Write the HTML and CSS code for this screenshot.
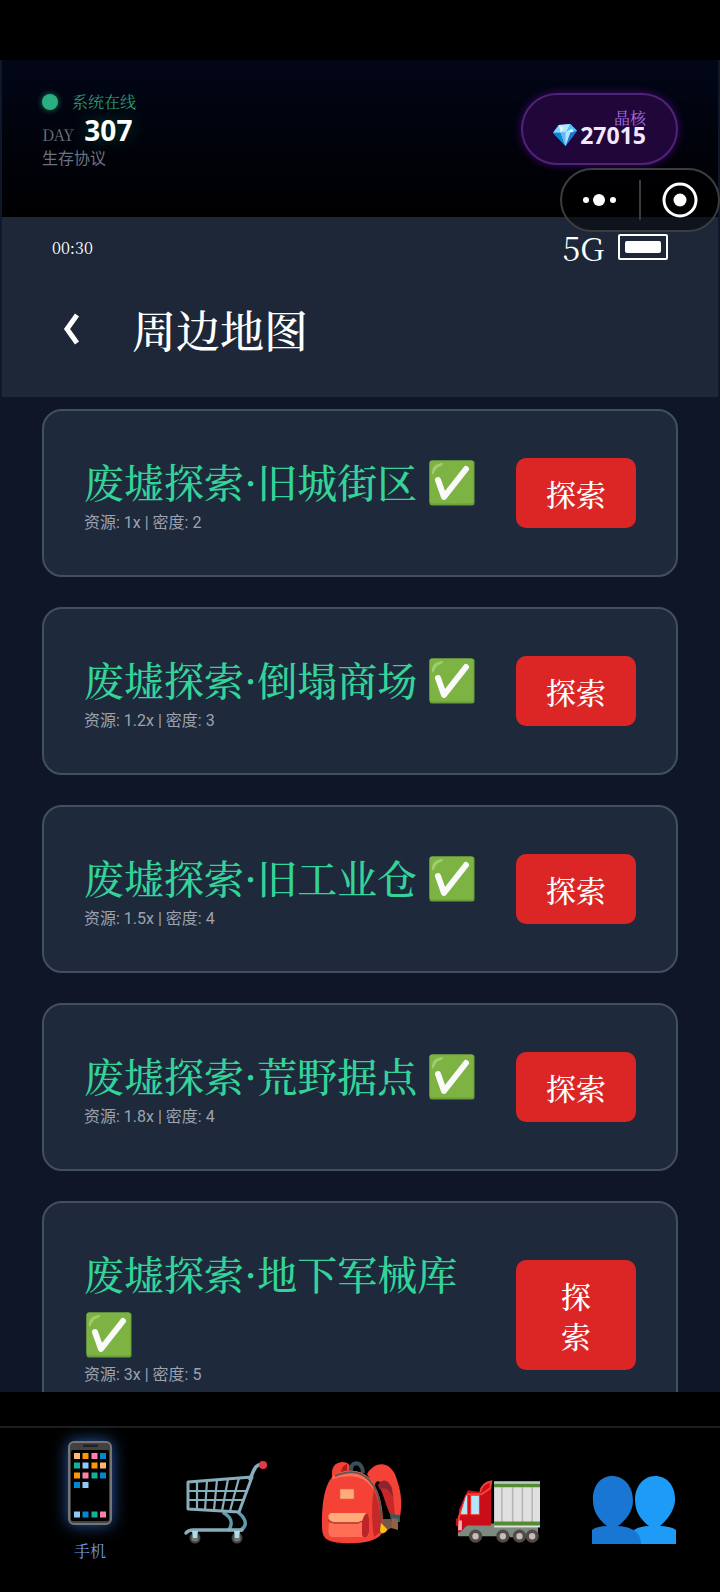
FILE: index.html
```html
<!DOCTYPE html>
<html lang="zh-CN">
<head>
<meta charset="utf-8">
<meta name="viewport" content="width=device-width, initial-scale=1">
<title>周边地图</title>
<link rel="stylesheet" href="styles.css">
</head>
<body>
<svg class="sprite" aria-hidden="true">
  <symbol id="check" viewBox="0 0 46 46">
    <rect x="0.5" y="0.5" width="45" height="45" rx="2.5" fill="#689f38"/>
    <rect x="0.5" y="0.5" width="44" height="43" rx="2.5" fill="#7cb342"/>
    <path d="M3 13C3 7 6 4 13 3c2 0 1 2-1 3-4 1-5 3-7 7-1 2-2 2-2 0z" fill="#aed581" opacity=".75"/>
    <path d="M9 20l6 17L37 9" fill="none" stroke="#fafafa" stroke-width="6" stroke-linecap="round" stroke-linejoin="round"/>
  </symbol>
</svg>

<div class="app">
  <header class="hud">
    <div class="hud-left">
      <div class="online"><span class="online-dot"></span>系统在线</div>
      <div class="day"><span class="day-label">DAY</span><strong class="day-num">307</strong></div>
      <div class="protocol">生存协议</div>
    </div>
    <div class="crystal">
      <span class="crystal-label">晶核</span>
      <span class="crystal-value">
        <svg class="gem" viewBox="0 0 26 24" aria-hidden="true">
          <path d="M0 9L6 1l12-1 7 7-12 16z" fill="#42a5f5"/>
          <path d="M0 9l6-8 2 8z" fill="#81d4fa"/>
          <path d="M6 1l12-1-4 8-6 1z" fill="#b3e5fc"/>
          <path d="M18 0l7 7-11 1z" fill="#4fc3f7"/>
          <path d="M0 9h8l5 14z" fill="#0288d1"/>
          <path d="M8 9l6-1 6 1-7 14z" fill="#b3e5fc"/>
          <path d="M8 9l5 14V8z" fill="#64b5f6"/>
          <path d="M6 1l5 3-3 5zM14 8l6-3 2 4z" fill="#e1f5fe"/>
          <path d="M18 9l7-2-12 16z" fill="#1976d2"/>
        </svg>
        <strong>27015</strong>
      </span>
    </div>
  </header>

  <div class="titlebar">
    <div class="status">
      <span class="clock">00:30</span>
      <span class="signal">5G<span class="battery"><span class="battery-level"></span></span></span>
    </div>
    <div class="heading">
      <button class="back" type="button" aria-label="返回">
        <svg viewBox="0 0 16 32" aria-hidden="true"><path d="M13 2L3 16l10 14" fill="none" stroke="#fff" stroke-width="5"/></svg>
      </button>
      <h1>周边地图</h1>
    </div>
  </div>

  <main class="list">
    <article class="card">
      <div class="info">
        <h2>废墟探索·旧城街区 <svg class="done" role="img" aria-label="已完成"><use href="#check"/></svg></h2>
        <p>资源: 1x | 密度: 2</p>
      </div>
      <button class="explore" type="button">探索</button>
    </article>
    <article class="card">
      <div class="info">
        <h2>废墟探索·倒塌商场 <svg class="done" role="img" aria-label="已完成"><use href="#check"/></svg></h2>
        <p>资源: 1.2x | 密度: 3</p>
      </div>
      <button class="explore" type="button">探索</button>
    </article>
    <article class="card">
      <div class="info">
        <h2>废墟探索·旧工业仓 <svg class="done" role="img" aria-label="已完成"><use href="#check"/></svg></h2>
        <p>资源: 1.5x | 密度: 4</p>
      </div>
      <button class="explore" type="button">探索</button>
    </article>
    <article class="card">
      <div class="info">
        <h2>废墟探索·荒野据点 <svg class="done" role="img" aria-label="已完成"><use href="#check"/></svg></h2>
        <p>资源: 1.8x | 密度: 4</p>
      </div>
      <button class="explore" type="button">探索</button>
    </article>
    <article class="card">
      <div class="info">
        <h2>废墟探索·地下军械库 <svg class="done" role="img" aria-label="已完成"><use href="#check"/></svg></h2>
        <p>资源: 3x | 密度: 5</p>
      </div>
      <button class="explore explore-stacked" type="button">探索</button>
    </article>
  </main>
</div>

<nav class="tabs">
  <button class="tab tab-active" type="button">
    <svg class="phone" viewBox="0 0 44 84" aria-hidden="true">
      <rect x="1" y="1" width="42" height="82" rx="5" fill="#424242" stroke="#757575" stroke-width="2"/>
      <rect x="15" y="3.500" width="15" height="2.500" rx="1" fill="#212121"/>
      <rect x="3" y="9" width="38" height="71" rx="2" fill="#000"/>
      <g fill="#ffb974"><path d="M6 12h6v6H6zM32 21.500h6v6h-6z"/></g>
      <g fill="#ff9800"><path d="M14.500 12h6v6h-6zM23.500 21.500h6v6h-6zM6 31.500h6v6H6z"/></g>
      <g fill="#ff80ab"><path d="M23.500 12h6v6h-6zM14.500 31.500h6v6h-6zM32 70.500h6v6h-6z"/></g>
      <g fill="#0288d1"><path d="M32 12h6v6h-6zM32 31.500h6v6h-6zM6 41h6v6H6zM14.500 70.500h6v6h-6z"/></g>
      <g fill="#10b29a"><path d="M6 21.500h6v6H6zM23.500 31.500h6v6h-6zM23.500 70.500h6v6h-6z"/></g>
      <g fill="#90caf9"><path d="M14.500 21.500h6v6h-6zM14.500 41h6v6h-6zM6 70.500h6v6H6z"/></g>
    </svg>
    <span>手机</span>
  </button>
  <button class="tab" type="button" aria-label="商店">
    <svg viewBox="0 0 84 84" aria-hidden="true">
      <g fill="none" stroke="#87aebc" stroke-linecap="round" stroke-linejoin="round">
        <path d="M40 52c8 5 9 10 5 17M55 52c8 7 8 13 2 17" stroke="#6299ad" stroke-width="3.500"/>
        <path d="M2 72c3-4 6-3 10-3h46" stroke-width="3.500"/>
        <path d="M4 21l64-5-13 35-51-3z" stroke-width="3"/>
        <path d="M13 21v27M23 20l-2 29M33 19l-3 30M44 18l-6 32M55 17l-9 33M4 30h58M4 39h55" stroke-width="2.200"/>
        <path d="M66 18C71 7 71 4 78 3" stroke-width="3.500"/>
      </g>
      <circle cx="79" cy="4" r="4" fill="#e53945"/>
      <g fill="#757575" stroke="#424242" stroke-width="2"><circle cx="11" cy="77" r="4.500"/><circle cx="53" cy="77" r="4.500"/></g>
      <path d="M8 70h6l-1 7h-4zM50 70h6l-1 7h-4z" fill="#b0dce9"/>
    </svg>
  </button>
  <button class="tab" type="button" aria-label="背包">
    <svg viewBox="0 0 84 84" aria-hidden="true">
      <path d="M12 17c-1-12 3-15 10-16 6 0 9 3 8 9z" fill="#f44336"/>
      <path d="M21 13c0-7 3-9 6-10v8z" fill="#b71c1c"/>
      <path d="M31 12c-2-13 12-13 12 0" fill="none" stroke="#37505e" stroke-width="4"/>
      <path d="M62 58c1 8-4 12-7 15l5 1 14-9-1-7z" fill="#795548"/>
      <path d="M47 13C57-3 73 2 77 19c5 14 5 26 3 37H71C67 45 66 33 60 21c-3-2-4 0-6 4z" fill="#f44336"/>
      <path d="M58 24c6-7 12-2 15 9l2 22h-4C65 44 64 32 58 24z" fill="#c62828"/>
      <path d="M58 24c5-8 11-4 14 3l1 9C69 28 64 25 60 29z" fill="#8e2430"/>
      <path d="M70 53l10 1v7h-9z" fill="#355961"/>
      <path d="M72 57l6 1v11l-7-2z" fill="#8d6245"/>
      <path d="M13 15C28 6 46 8 55 25c8 15 9 34 7 47-5 9-22 11-40 10-16-1-20-5-20-17 0-19 1-39 11-50z" fill="#f44336"/>
      <path d="M13 15C28 6 46 8 55 25l-2 3C43 12 27 14 12 18z" fill="#ff7058"/>
      <path d="M54 29c6 14 8 32 6 42l-6 5c-2-11-3-33 0-47z" fill="#c62828"/>
      <path d="M15 15c20-8 33-3 42 16 4 12 5 27 4 41" fill="none" stroke="#665452" stroke-width="2"/>
      <rect x="20" y="28" width="14" height="10" fill="#ffab7a" stroke="#d96547" stroke-width=".6"/>
      <path d="M9 61h35l5-7v18c0 4-3 4-7 4H12c-4 0-4-5-3-15z" fill="#ff6e55"/>
      <path d="M11 52h35c-1 7-3 9-7 9H14c-7-1-7-8-3-9z" fill="#ffab7a"/>
      <path d="M8 59c2 3 4 3 7 3h23l4-2" stroke="#b53a2b" stroke-width="1.300" fill="none"/>
      <path d="M42 61c3-12 7-9 7-2v11c0 7-6 8-7 4z" fill="#bb2529"/>
      <path d="M61 62l6 6c0 4-6 6-7 2z" fill="#ffc107"/>
    </svg>
  </button>
  <button class="tab" type="button" aria-label="运输">
    <svg viewBox="0 0 86 84" aria-hidden="true">
      <path d="M2 66h7l3-3h42v3h30v8l-1 3H55v-1H2z" fill="#7d8a80"/>
      <path d="M26 31c1-7 4-10 10-11v45H13c-5 0-6 8-11 7v-6l-2-1v-7l3-1v-8l9-20z" fill="#c90d19"/>
      <path d="M25 31c1-7 5-10 11-11l-1 7-9 6H12l-9 23v11" fill="none" stroke="#f44336" stroke-width="2"/>
      <path d="M10 34h2v20H4zM15 34h9v20h-9z" fill="#b3e5fc" stroke="#ff291c" stroke-width="1"/>
      <path d="M3 60h3v10H2z" fill="#efb2bb"/>
      <rect x="39" y="20" width="47" height="47" fill="#e0e0e0"/>
      <path d="M47 26v36M58 26v36M68 26v36M78 26v36" stroke="#b4b4b4" stroke-width="1.500"/>
      <path d="M39 22h47v4H39zM39 61h47v4H39z" fill="#558b2f"/>
      <path d="M39 20h47v2H39z" fill="#bbc9c4"/>
      <g fill="#c6bdba" stroke="#514a48" stroke-width="3.500"><circle cx="20" cy="76" r="5"/><circle cx="48" cy="76" r="5"/><circle cx="65" cy="76" r="5"/><circle cx="78" cy="76" r="5"/></g>
    </svg>
  </button>
  <button class="tab" type="button" aria-label="社交">
    <svg viewBox="0 0 84 84" aria-hidden="true">
      <path d="M42 69c5-3 9-4 15-4-8-6-14-14-14-26 0-13 8-24 20-24s21 10 20 25c-1 11-9 20-15 25 6 0 12 1 16 4v14H42z" fill="#1d9bf6"/>
      <path d="M0 69c4-3 9-4 15-4C8 60 1 51 1 40c-1-14 7-25 19-25s21 10 21 25c0 11-8 20-15 25 14 1 23 6 23 18H0z" fill="#1976d2"/>
    </svg>
  </button>
</nav>

<div class="capsule">
  <button type="button" aria-label="更多">
    <svg viewBox="0 0 36 36" aria-hidden="true" fill="#fff"><circle cx="4" cy="18" r="3"/><circle cx="17" cy="18" r="6"/><circle cx="31" cy="18" r="3"/></svg>
  </button>
  <span class="capsule-line"></span>
  <button type="button" aria-label="关闭">
    <svg viewBox="0 0 36 36" aria-hidden="true"><circle cx="18" cy="18" r="16" fill="none" stroke="#fff" stroke-width="3"/><circle cx="18" cy="18" r="6.500" fill="#fff"/></svg>
  </button>
</div>
</body>
</html>
```
FILE: styles.css
```css
:root {
  --serif: "Noto Serif CJK SC", "Noto Sans CJK SC", "Liberation Serif", serif;
  --sans: "Noto Sans", "Noto Sans CJK SC", sans-serif;
}

* { box-sizing: border-box; }

body {
  margin: 0;
  height: 100vh;
  display: flex;
  flex-direction: column;
  overflow: hidden;
  padding-top: 60px;
  background: #000;
  color: #fff;
  font-family: var(--serif);
  font-size: 16px;
}

h1, h2, p { margin: 0; font-weight: 500; }

button {
  border: 0;
  margin: 0;
  padding: 0;
  background: none;
  color: inherit;
  font: inherit;
}

svg { display: block; overflow: visible; }
.sprite { position: absolute; width: 0; height: 0; }

.app {
  flex: 1;
  min-height: 0;
  display: flex;
  flex-direction: column;
  border: solid #0f172a;
  border-width: 0 2px;
  background: #0e1628;
}

/* Top HUD */
.hud {
  display: flex;
  justify-content: space-between;
  align-items: flex-start;
  height: 157px;
  flex: none;
  padding: 32px 40px 0;
  background: linear-gradient(#020617, #000);
}

.online {
  display: flex;
  align-items: center;
  gap: 14px;
  line-height: 20px;
  color: #2a9d74;
}

.online-dot {
  width: 16px;
  height: 16px;
  border-radius: 50%;
  background: #2bae80;
  box-shadow: 0 0 6px #1c7556;
}

.day { display: flex; align-items: baseline; gap: 10px; height: 36px; line-height: 36px; }
.day-label { color: #6b7280; }
.day-num {
  font-family: var(--sans);
  font-size: 28px;
  text-shadow: 0 0 16px #10b98166;
}
.protocol { font-family: var(--sans); line-height: 20px; color: #6b7280; }

.crystal {
  display: flex;
  flex-direction: column;
  align-items: flex-end;
  margin-top: 1px;
  height: 72px;
  padding: 14px 30px 0;
  border: 2px solid #4f2377;
  border-radius: 36px;
  background: #21063a;
  box-shadow: 0 0 10px #3b0764;
}
.crystal-label { line-height: 18px; color: #a66be0; }
.crystal-value {
  display: flex;
  align-items: center;
  gap: 2px;
  height: 16px;
  font-family: var(--sans);
  font-size: 23px;
  line-height: 16px;
  color: #f3e8ff;
}
.gem { width: 25px; height: 23px; }

/* Phone status and page title */
.titlebar { flex: none; height: 180px; padding: 12px 50px 0; background: #1d2738; }
.status { display: flex; justify-content: space-between; align-items: center; height: 36px; }
.signal { display: flex; align-items: center; gap: 14px; font-size: 32px; line-height: 36px; }
.battery {
  width: 50px;
  height: 26px;
  padding: 5px;
  border: 2px solid #fff;
  border-radius: 2px;
}
.battery-level { display: block; height: 100%; border-radius: 2px; background: #fff; }

.heading { display: flex; align-items: center; gap: 52px; margin-top: 32px; padding-left: 12px; }
.back svg { width: 16px; height: 32px; }
h1 { font-size: 44px; line-height: 64px; }

/* Location list */
.list {
  flex: 1;
  min-height: 0;
  overflow: hidden;
  display: flex;
  flex-direction: column;
  gap: 30px;
  padding: 12px 40px 0;
}
.card {
  flex: none;
  display: flex;
  justify-content: space-between;
  align-items: center;
  gap: 10px;
  padding: 40px;
  border: 2px solid #434f60;
  border-radius: 20px;
  background: #1e293b;
}
h2 { font-size: 40px; line-height: 60px; color: #34d399; }
.done { display: inline-block; width: 46px; height: 46px; margin-left: 2px; vertical-align: -8px; }
.info p {
  font-family: Roboto, "Noto Sans CJK SC", sans-serif;
  font-weight: 400;
  line-height: 24px;
  color: #9ca3af;
}
.explore {
  flex: none;
  width: 120px;
  padding: 15px 30px;
  border-radius: 10px;
  background: #dc2626;
  font-size: 30px;
  font-weight: 500;
  line-height: 40px;
}
.explore-stacked { padding: 15px 40px; }

/* Bottom tabs */
.tabs {
  flex: none;
  display: grid;
  grid-template-columns: repeat(5, 1fr);
  height: 200px;
  padding: 49px 18px 0 22px;
  background: linear-gradient(#000 34px, #1d1d1f 34px, #1d1d1f 36px, #000 36px);
}
.tab { display: flex; flex-direction: column; align-items: center; align-self: start; }
.tab svg { width: 84px; height: 84px; margin-top: 20px; }
.tab .phone { width: 44px; margin-top: 0; filter: drop-shadow(0 0 8px #3b82f6aa); }
.tab-active { color: #6f9ee8; line-height: 24px; gap: 14px; }

/* Floating mini-program capsule */
.capsule {
  position: absolute;
  top: 168px;
  right: 0;
  display: flex;
  align-items: center;
  justify-content: space-between;
  width: 160px;
  height: 64px;
  padding: 0 20px;
  border: 2px solid #3b3d40;
  border-radius: 32px;
  background: #00000080;
}
.capsule svg { width: 36px; height: 36px; }
.capsule-line { width: 2px; height: 40px; background: #3b3d40; }
```
